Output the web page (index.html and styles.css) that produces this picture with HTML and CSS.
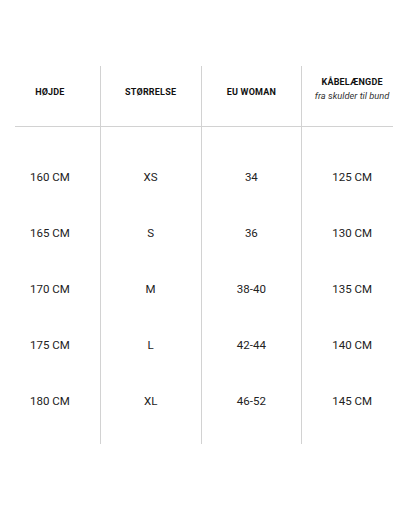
FILE: index.html
```html
<!DOCTYPE html>
<html lang="da">
<head>
<meta charset="utf-8">
<title>Størrelsesguide</title>
<link rel="stylesheet" href="styles.css">
</head>
<body>
<div class="table">
  <div class="col">
    <div class="head"><span class="label">HØJDE</span></div>
    <div class="body">
      <div class="cell">160 CM</div>
      <div class="cell">165 CM</div>
      <div class="cell">170 CM</div>
      <div class="cell">175 CM</div>
      <div class="cell">180 CM</div>
    </div>
  </div>
  <div class="col">
    <div class="head"><span class="label">STØRRELSE</span></div>
    <div class="body">
      <div class="cell">XS</div>
      <div class="cell">S</div>
      <div class="cell">M</div>
      <div class="cell">L</div>
      <div class="cell">XL</div>
    </div>
  </div>
  <div class="col">
    <div class="head"><span class="label">EU WOMAN</span></div>
    <div class="body">
      <div class="cell">34</div>
      <div class="cell">36</div>
      <div class="cell">38-40</div>
      <div class="cell">42-44</div>
      <div class="cell">46-52</div>
    </div>
  </div>
  <div class="col">
    <div class="head">
      <span class="label">KÅBELÆNGDE</span>
      <span class="sub">fra skulder til bund</span>
    </div>
    <div class="body">
      <div class="cell">125 CM</div>
      <div class="cell">130 CM</div>
      <div class="cell">135 CM</div>
      <div class="cell">140 CM</div>
      <div class="cell">145 CM</div>
    </div>
  </div>
</div>
</body>
</html>
```
FILE: styles.css
```css
html, body {
  margin: 0;
  padding: 0;
  background: #fff;
}

body {
  font-family: Roboto, "Liberation Sans", sans-serif;
  color: #222;
  width: 402px;
  height: 507px;
}

.table {
  display: flex;
  margin-top: 66px;
}

.col {
  flex: 1 1 0;
  display: flex;
  flex-direction: column;
  border-left: 1px solid #d2d2d2;
}

.col:first-child {
  border-left: none;
}

.head {
  height: 61px;
  box-sizing: border-box;
  padding-bottom: 8px;
  border-bottom: 1px solid #d2d2d2;
  display: flex;
  flex-direction: column;
  align-items: center;
  justify-content: center;
  text-align: center;
}

.col:first-child .head {
  margin-left: 15px;
  padding-right: 15px;
}

.col:last-child .head {
  margin-right: 9px;
  padding-left: 9px;
}

.label {
  font-size: 9px;
  font-weight: 700;
  letter-spacing: 0.2px;
  color: #111;
  line-height: 13px;
}

.sub {
  font-size: 9.3px;
  font-style: italic;
  color: #333;
  line-height: 13px;
  padding-bottom: 6px;
}

.body {
  display: flex;
  flex-direction: column;
  padding: 22px 0 15px;
}

.cell {
  height: 56px;
  display: flex;
  align-items: center;
  justify-content: center;
  font-size: 11.5px;
  color: #222;
}
```
